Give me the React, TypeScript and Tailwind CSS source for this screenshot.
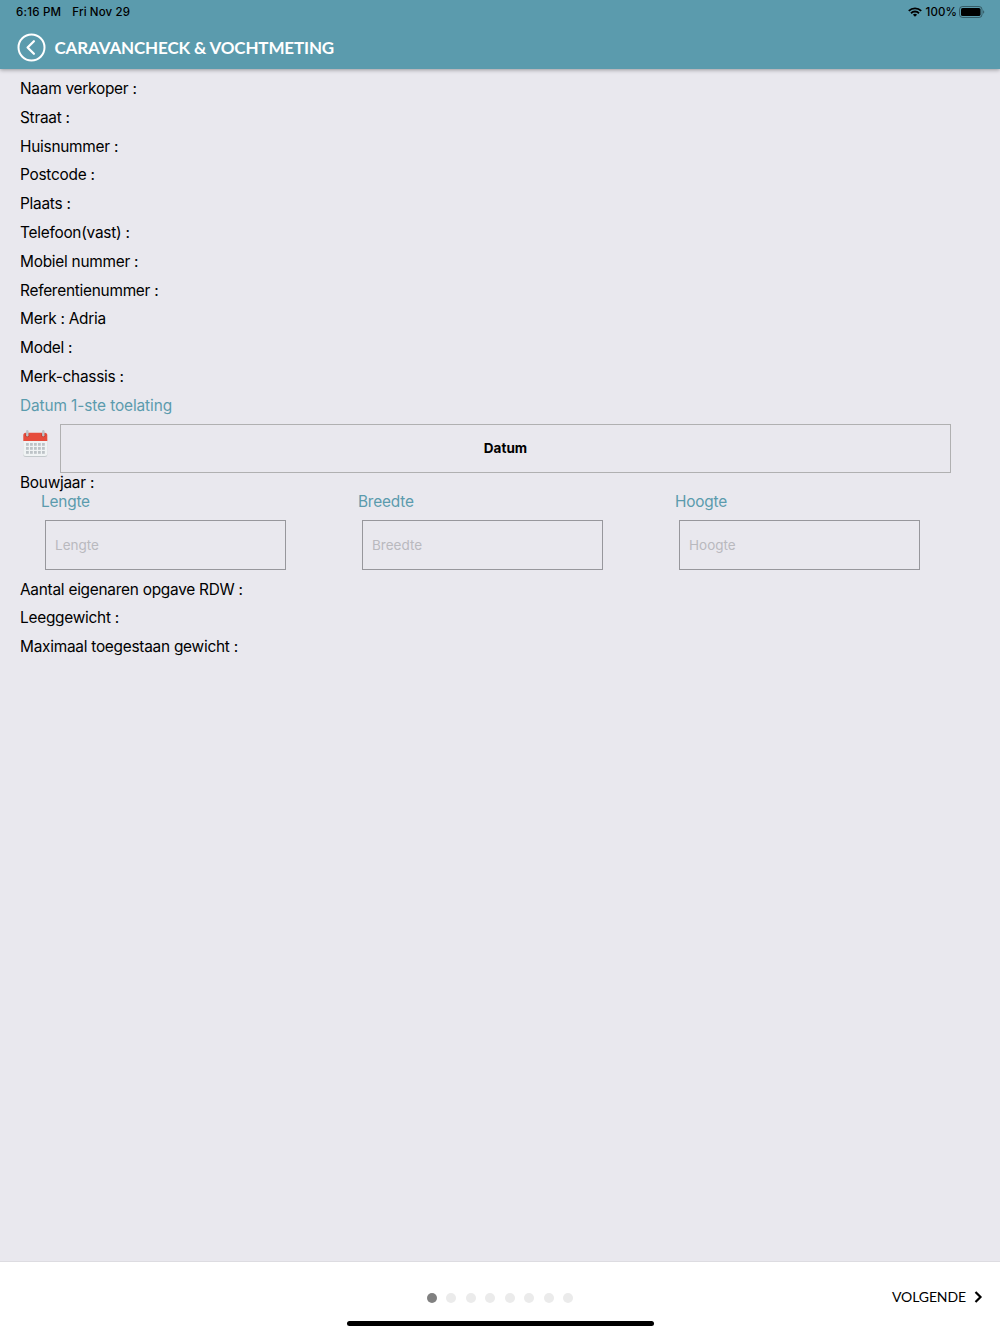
import { useState } from 'react'

const sellerFields = [
  { label: 'Naam verkoper', value: '' },
  { label: 'Straat', value: '' },
  { label: 'Huisnummer', value: '' },
  { label: 'Postcode', value: '' },
  { label: 'Plaats', value: '' },
  { label: 'Telefoon(vast)', value: '' },
  { label: 'Mobiel nummer', value: '' },
  { label: 'Referentienummer', value: '' },
  { label: 'Merk', value: 'Adria' },
  { label: 'Model', value: '' },
  { label: 'Merk-chassis', value: '' },
]

const weightFields = [
  { label: 'Aantal eigenaren opgave RDW', value: '' },
  { label: 'Leeggewicht', value: '' },
  { label: 'Maximaal toegestaan gewicht', value: '' },
]

const dimensions = ['Lengte', 'Breedte', 'Hoogte']

function StatusBar() {
  return (
    <div className="flex h-6 items-center justify-between pl-4 pr-[15px] text-[11.5px] font-medium text-black">
      <div className="flex gap-[11px] pt-px">
        <span className="tracking-[0.23px]">6:16 PM</span>
        <span className="tracking-[0.13px]">Fri Nov 29</span>
      </div>
      <div className="flex items-center">
        <svg width="14" height="10" viewBox="0 0 14 10" fill="none" stroke="black" strokeWidth="1.9">
          <path d="M0.8 3.9a8.8 8.8 0 0 1 12.4 0" />
          <path d="M3 6.2a5.7 5.7 0 0 1 8 0" />
          <path d="M7 9.8L4.9 7.7a3 3 0 0 1 4.2 0z" fill="black" stroke="none" />
        </svg>
        <span className="ml-1 pt-px tracking-[0.1px]">100%</span>
        <svg className="ml-[2px]" width="26" height="12" viewBox="0 0 26 12">
          <rect x="0.5" y="0.5" width="22.5" height="11" rx="3" fill="none" stroke="black" strokeOpacity="0.4" />
          <rect x="2" y="2" width="19.5" height="8" rx="1.6" fill="black" />
          <path d="M24.2 4.2v3.6c1.4-.6 1.4-3 0-3.6z" fill="black" fillOpacity="0.45" />
        </svg>
      </div>
    </div>
  )
}

function Header() {
  return (
    <header className="h-[69px] shrink-0 bg-[#5b9bad] shadow-[0_1px_4px_rgba(0,0,0,0.35)]">
      <StatusBar />
      <div className="flex items-center pl-[17px] pt-[9px]">
        <button aria-label="Terug">
          <svg className="block" width="29" height="29" viewBox="0 0 29 29" fill="none" stroke="white" strokeLinecap="round" strokeLinejoin="round">
            <circle cx="14.5" cy="14.5" r="13" strokeWidth="2" />
            <path d="M16.9 8.2L10.6 14.5l6.3 6.3" strokeWidth="2.3" />
          </svg>
        </button>
        <h1 className="ml-[8.5px] font-['Lato','Liberation_Sans',sans-serif] text-[17px] font-bold leading-6 tracking-[-0.15px] text-white">
          CARAVANCHECK &amp; VOCHTMETING
        </h1>
      </div>
    </header>
  )
}

function FieldRow({ label, value }: { label: string; value: string }) {
  return (
    <p className="h-[28.8px] leading-[28.8px] tracking-[-0.25px]">
      {label} : {value}
    </p>
  )
}

function CalendarIcon() {
  return (
    <svg width="26" height="30" viewBox="0 0 26 30">
      <path d="M1.3 10h24v15.5a2.5 2.5 0 0 1-2.5 2.5h-19a2.5 2.5 0 0 1-2.5-2.5z" fill="#c3c9cc" />
      <path d="M1.3 10h24v14.5a2.5 2.5 0 0 1-2.5 2.5h-19a2.5 2.5 0 0 1-2.5-2.5z" fill="#f0f3f4" />
      <path d="M1.3 12V6.2a2.5 2.5 0 0 1 2.5-2.5h19a2.5 2.5 0 0 1 2.5 2.5V12z" fill="#e64c3c" />
      {[5.3, 21.3].map((x) => (
        <g key={x}>
          <circle cx={x} cy="6.2" r="2" fill="#c0392b" />
          <rect x={x - 1.2} y="1" width="2.4" height="6.4" rx="1.2" fill="#bdc3c7" />
        </g>
      ))}
      {[14, 18, 22].map((y) =>
        [4, 8, 12, 16, 20].map((x) => (
          <rect key={`${x}-${y}`} x={x} y={y} width="2.8" height="2.8" fill="#bdc3c7" />
        )),
      )}
    </svg>
  )
}

function DimensionInput({ name }: { name: string }) {
  return (
    <div className="w-[317px]">
      <label className="block h-[19px] leading-[19px] tracking-[-0.2px] text-[#5b9bad]">{name}</label>
      <input
        placeholder={name}
        className="ml-1 mt-[9px] block h-[50px] w-[241px] border border-[#97979c] bg-transparent px-[9px] text-[13.5px] placeholder:text-[#b9b9be] outline-none"
      />
    </div>
  )
}

function Footer() {
  const [page] = useState(0)

  return (
    <footer className="flex h-[73px] shrink-0 flex-col border-t border-[#dddce1] bg-white">
      <div className="grid h-[59px] grid-cols-[1fr_auto_1fr] items-center pt-[11px]">
        <div />
        <div className="flex gap-[9.5px] pt-px">
          {Array.from({ length: 8 }, (_, i) => (
            <span
              key={i}
              className={`size-[10px] rounded-full ${i === page ? 'bg-[#808080]' : 'bg-[#ebebeb]'}`}
            />
          ))}
        </div>
        <button className="flex items-center justify-self-end pr-[17px] font-['Lato','Liberation_Sans',sans-serif] text-[14px] text-black">
          <span className="pb-[2px] tracking-[-0.1px]">VOLGENDE</span>
          <svg className="ml-[8px]" width="9" height="12" viewBox="0 0 9 12" fill="none" stroke="black" strokeWidth="2.2">
            <path d="M1.5 1l5 5-5 5" />
          </svg>
        </button>
      </div>
      <div className="mx-auto h-[5px] w-[307px] rounded-full bg-black" />
    </footer>
  )
}

export default function App() {
  return (
    <div className="flex h-[1334px] w-[1000px] flex-col bg-[#e9e8ee] font-['Inter','Liberation_Sans',sans-serif] text-[15.4px] text-black [font-feature-settings:'calt'_0]">
      <Header />
      <main className="flex-1 pl-5 pt-[6px]">
        {sellerFields.map((field) => (
          <FieldRow key={field.label} {...field} />
        ))}
        <p className="h-[28.8px] leading-[28.8px] tracking-[-0.1px] text-[#5b9bad]">Datum 1-ste toelating</p>

        <div className="mt-[3px] flex">
          <div className="w-10 pl-[2px] pt-[5px]">
            <CalendarIcon />
          </div>
          <button className="h-[49px] w-[891px] border border-[#b0b0b1] text-[13.5px] font-bold">Datum</button>
        </div>

        <p className="h-[19px] leading-[19px] tracking-[-0.25px]">Bouwjaar :</p>
        <div className="flex pl-[21px]">
          {dimensions.map((name) => (
            <DimensionInput key={name} name={name} />
          ))}
        </div>

        <div className="mt-[6px]">
          {weightFields.map((field) => (
            <FieldRow key={field.label} {...field} />
          ))}
        </div>
      </main>
      <Footer />
    </div>
  )
}
